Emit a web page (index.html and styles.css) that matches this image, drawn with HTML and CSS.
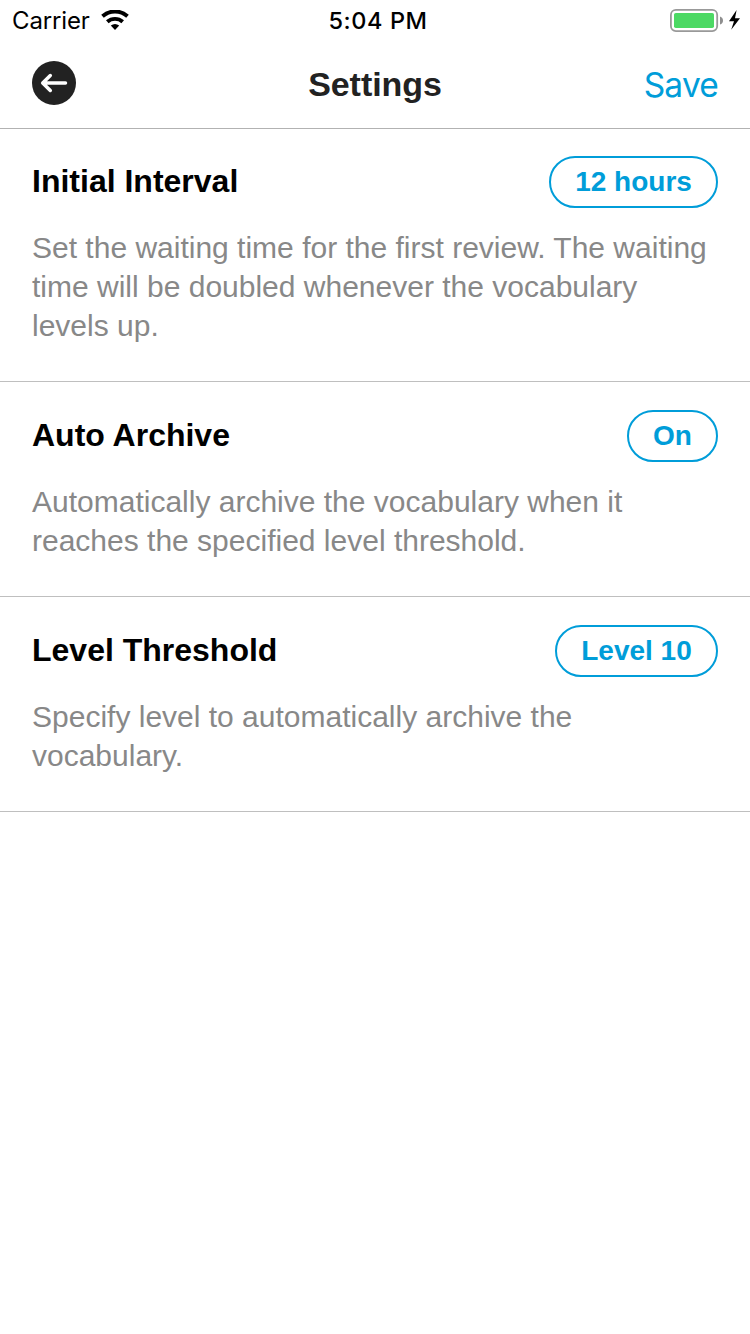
FILE: index.html
```html
<!DOCTYPE html>
<html lang="en">
<head>
<meta charset="utf-8">
<title>Settings</title>
<link rel="stylesheet" href="styles.css">
</head>
<body>
<div class="status">
  <div class="status-left">
    <span class="carrier">Carrier</span>
    <svg class="wifi" width="28" height="20" viewBox="0 0 28 20"><path d="M1.500 6.200a18.800 18.800 0 0 1 25 0M6.300 11.800a11.600 11.600 0 0 1 15.400 0" fill="none" stroke="#000" stroke-width="3.900"/><path d="M9.800 15.600q4.200-3.300 8.400 0L14 20z"/></svg>
  </div>
  <span class="clock">5:04 PM</span>
  <div class="status-right">
    <svg width="72" height="24" viewBox="0 0 72 24"><rect x=".9" y=".9" width="46.300" height="21.200" rx="5" fill="#fff" stroke="#999" stroke-width="1.800"/><rect x="4" y="4" width="40" height="15" rx="1.800" fill="#4cd964"/><path d="M50 7.500q3 1 3 4t-3 4z" fill="#8e8e8e"/><path d="M66.600 1L59 12.200H64L61.200 20.800 70 9.200H65z"/></svg>
  </div>
</div>
<header class="nav">
  <button class="back" aria-label="Back"><svg width="44" height="44" viewBox="0 0 44 44"><circle cx="22" cy="22" r="22" fill="#222"/><path d="M33.500 22H11M18.300 14.500L10.700 22L18.300 29.500" fill="none" stroke="#fff" stroke-width="3.500" stroke-linecap="round" stroke-linejoin="round"/></svg></button>
  <h1 class="title">Settings</h1>
  <a class="save">Save</a>
</header>
<main>
  <section class="row first">
    <div class="head"><h2>Initial Interval</h2><button class="pill hours">12 hours</button></div>
    <p>Set the waiting time for the first review. The waiting<br>time will be doubled whenever the vocabulary<br>levels up.</p>
  </section>
  <section class="row">
    <div class="head"><h2>Auto Archive</h2><button class="pill on">On</button></div>
    <p>Automatically archive the vocabulary when it<br>reaches the specified level threshold.</p>
  </section>
  <section class="row">
    <div class="head"><h2>Level Threshold</h2><button class="pill level">Level 10</button></div>
    <p>Specify level to automatically archive the<br>vocabulary.</p>
  </section>
</main>
</body>
</html>
```
FILE: styles.css
```css
* { box-sizing: border-box; }
body { margin: 0; background: #fff; color: #000; font-family: "Liberation Sans", Arial, sans-serif; }
h1, h2, p { margin: 0; }
button { margin: 0; font-family: inherit; background: none; }
svg { display: block; }
.status { height: 40px; display: grid; grid-template-columns: 1fr auto 1fr; align-items: center; padding: 1px 8px 0 12px; font: 24px/40px Inter, sans-serif; }
.status-left { display: flex; align-items: center; gap: 11px; }
.wifi { margin-bottom: 2px; }
.status-right { display: flex; justify-content: flex-end; }
.carrier { letter-spacing: -0.15px; }
.clock { font-weight: 500; font-size: 23.5px; letter-spacing: 0.6px; padding-left: 2px; }
.nav { height: 89px; display: grid; grid-template-columns: 1fr auto 1fr; align-items: center; padding: 0 32px; border-bottom: 1px solid #b2b2b2; }
.back { width: 44px; height: 44px; padding: 0; border: 0; margin-bottom: 2px; }
.title { color: #222; font-size: 34px; line-height: 44px; letter-spacing: -0.05px; }
.save { justify-self: end; margin-top: 2px; color: #009dd9; font: 33.5px/44px Inter, sans-serif; letter-spacing: -0.8px; }
.row { padding: 28px 32px 36px; border-bottom: 1px solid #bfbfbf; }
.first { padding-top: 27px; }
.head { display: flex; justify-content: space-between; align-items: center; height: 52px; }
h2 { font-size: 32px; line-height: 48px; margin-bottom: 2px; }
.pill { height: 52px; padding: 0; border: 2px solid #009dd9; border-radius: 26px; color: #009dd9; font-size: 28px; font-weight: 700; line-height: 44px; }
.hours { width: 169px; }
.on { width: 91px; }
.level { width: 163px; }
p { margin-top: 20px; color: #888; font-size: 30px; line-height: 39px; white-space: nowrap; }
```
